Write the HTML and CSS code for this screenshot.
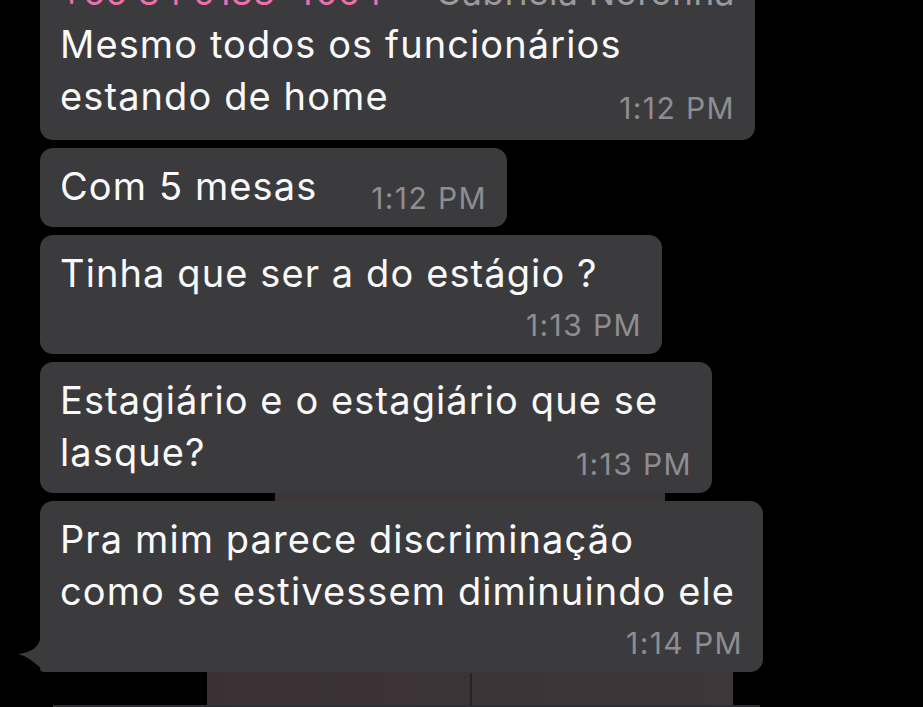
FILE: index.html
```html
<!DOCTYPE html>
<html lang="pt-BR">
<head>
  <meta charset="UTF-8">
  <title>Conversa</title>
  <link rel="stylesheet" href="styles.css">
</head>
<body>
  <div class="chat">
    <div class="bubble b-first">
      <div class="sender">
        <span class="phone">+55 84 9183-4064</span>
        <span class="name">~ Gabriela Noronha</span>
      </div>
      <div class="line">Mesmo todos os funcionários</div>
      <div class="last">
        <span class="line">estando de home</span>
        <span class="time">1:12 PM</span>
      </div>
    </div>

    <div class="bubble b-short">
      <div class="last">
        <span class="line">Com 5 mesas</span>
        <span class="time">1:12 PM</span>
      </div>
    </div>

    <div class="bubble b-mid">
      <div class="line">Tinha que ser a do estágio ?</div>
      <div class="time-row"><span class="time">1:13 PM</span></div>
    </div>

    <div class="bubble b-wide">
      <div class="line">Estagiário e o estagiário que se</div>
      <div class="last">
        <span class="line">lasque?</span>
        <span class="time">1:13 PM</span>
      </div>
    </div>

    <div class="bubble b-tail">
      <div class="line">Pra mim parece discriminação</div>
      <div class="line">como se estivessem diminuindo ele</div>
      <div class="time-row"><span class="time">1:14 PM</span></div>
      <svg class="tail" width="40" height="34" viewBox="0 0 40 34">
        <path d="M22 0 C22 8 13 15 0 16 C9 18 17 25 24 31 C26 33 28 34 32 34 L40 34 L40 0 Z" fill="#3b3b3d"/>
      </svg>
    </div>
  </div>
</body>
</html>
```

FILE: styles.css
```css
html, body {
  height: 100%;
}

body {
  margin: 0;
  overflow: hidden;
  font-family: 'Inter', 'Liberation Sans', sans-serif;
  background:
    linear-gradient(#2f2f31, #2f2f31) 53px 705px / 707px 2px no-repeat,
    linear-gradient(#2a2225, #2a2225) 470px 673px / 2px 34px no-repeat,
    linear-gradient(90deg, #3b3135, #3e3639) 207px 669px / 526px 38px no-repeat,
    linear-gradient(#3d3639, #3d3639) 275px 490px / 390px 14px no-repeat,
    #000;
}

.chat {
  display: flex;
  flex-direction: column;
  align-items: flex-start;
  gap: 8px;
  padding-left: 40px;
  margin-top: -46px;
}

.bubble {
  position: relative;
  box-sizing: border-box;
  background-color: #3b3b3d;
  border-radius: 13px;
  padding: 12px 20px 15px;
  color: #f9f9f9;
  font-size: 38px;
  line-height: 52px;
  letter-spacing: 1.1px;
}

.b-first { width: 715px; padding-bottom: 18px; }
.b-short { width: 467px; }
.b-mid { width: 622px; }
.b-wide { width: 672px; }
.b-tail { width: 723px; border-bottom-left-radius: 4px; }

.line {
  white-space: nowrap;
}

.sender {
  display: flex;
  justify-content: space-between;
  white-space: nowrap;
  font-size: 35px;
  letter-spacing: 0.6px;
}

.phone {
  color: #ef6fae;
}

.name {
  color: #9b9b9f;
}

.last {
  display: flex;
  justify-content: space-between;
  align-items: flex-end;
}

.time-row {
  display: flex;
  justify-content: flex-end;
  margin-top: 12px;
}

.time {
  color: #8d8d92;
  font-size: 30px;
  line-height: 28px;
  letter-spacing: 1.4px;
  white-space: nowrap;
}

.tail {
  position: absolute;
  left: -22px;
  bottom: 0;
}
```
